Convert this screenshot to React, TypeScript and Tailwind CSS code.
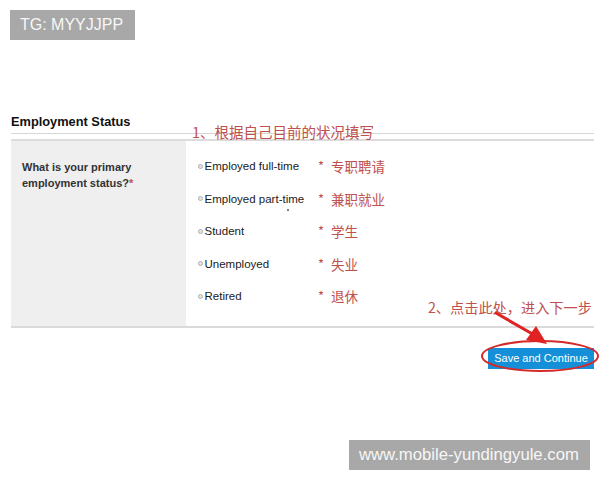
const options = [
  { label: "Employed full-time", note: "专职聘请" },
  { label: "Employed part-time", note: "兼职就业" },
  { label: "Student", note: "学生" },
  { label: "Unemployed", note: "失业" },
  { label: "Retired", note: "退休" },
];

const cjk = "font-['Noto_Sans_CJK_SC',sans-serif]";

const App = () => {
  return (
    <div className="relative w-[600px] h-[480px] overflow-hidden bg-white font-['Liberation_Sans',Arial,sans-serif] text-[#222]">
      {/* watermark top */}
      <div className="absolute left-[10px] top-[10px] w-[125px] h-[30px] bg-[#a8a8a8] text-[#f7f7f7] text-[16px] leading-[30px] pl-[10px]">
        TG: MYYJJPP
      </div>

      <section className="ml-[11px] w-[583px] pt-[114px]">
        <h2 className="text-[12.8px] leading-[16px] font-bold text-[#111]">
          Employment Status
        </h2>
        <div className="mt-[3px] h-px bg-[#d6d6d6]" />
        <div className="mt-[5px] h-[2px] bg-[#dcdcdc]" />

        <div className="flex h-[185px]">
          <div className="w-[175px] shrink-0 bg-[#efefef] pl-[11px] pt-[18px]">
            <p className="text-[11px] leading-[16px] font-bold text-[#333]">
              What is your primary
              <br />
              employment status?<span className="text-[#c0504d]">*</span>
            </p>
          </div>

          <div className="relative pl-[12px] pt-[17px]">
            {options.map((o) => (
              <div key={o.label} className="flex h-[32.5px] items-start">
                <div className="flex items-center w-[120px] h-[16px]">
                  <span className="w-[5px] h-[5px] rounded-full border border-[#b0b0b0] bg-[#e4e4e4] mr-[1.5px]" />
                  <span className="text-[11.5px] leading-[16px] text-[#1a1a1a]">{o.label}</span>
                </div>
                <div className={`flex items-center -mt-[1px] text-[#c0504d] ${cjk}`}>
                  <span className="text-[13px] w-[13px] leading-[18px]">*</span>
                  <span className="text-[13.5px] leading-[18px]">{o.note}</span>
                </div>
              </div>
            ))}
            <span className="absolute left-[101px] top-[68px] w-[2px] h-[2px] rounded-full bg-[#555]" />
          </div>
        </div>

        <div className="h-[2px] bg-[#dadada]" />

        <div className="flex justify-end mt-[20px]">
          <button className="w-[106px] h-[21px] bg-[#1590d8] text-white text-[11px] leading-[21px] text-center">
            Save and Continue
          </button>
        </div>
      </section>

      {/* annotations */}
      <div className={`absolute left-[192px] top-[122px] text-[14.5px] leading-[20px] text-[#c0504d] ${cjk}`}>
        1、根据自己目前的状况填写
      </div>
      <div className={`absolute left-[428px] top-[297px] text-[14.2px] leading-[20px] text-[#c0504d] ${cjk}`}>
        2、点击此处，进入下一步
      </div>

      <svg className="absolute left-0 top-0" width="600" height="480" viewBox="0 0 600 480">
        <ellipse cx="540" cy="356" rx="58" ry="15" fill="none" stroke="#d42a2a" strokeWidth="2" />
        <line x1="496" y1="313" x2="536" y2="336" stroke="#e02222" strokeWidth="3" strokeLinecap="round" />
        <polygon points="547,344 526,340 536,326" fill="#e02222" />
      </svg>

      {/* watermark bottom */}
      <div className="absolute left-[349px] top-[440px] w-[241px] h-[30px] bg-[#a8a8a8] text-[#f7f7f7] text-[16.7px] leading-[30px] pl-[10px]">
        www.mobile-yundingyule.com
      </div>
    </div>
  );
};

export default App;
